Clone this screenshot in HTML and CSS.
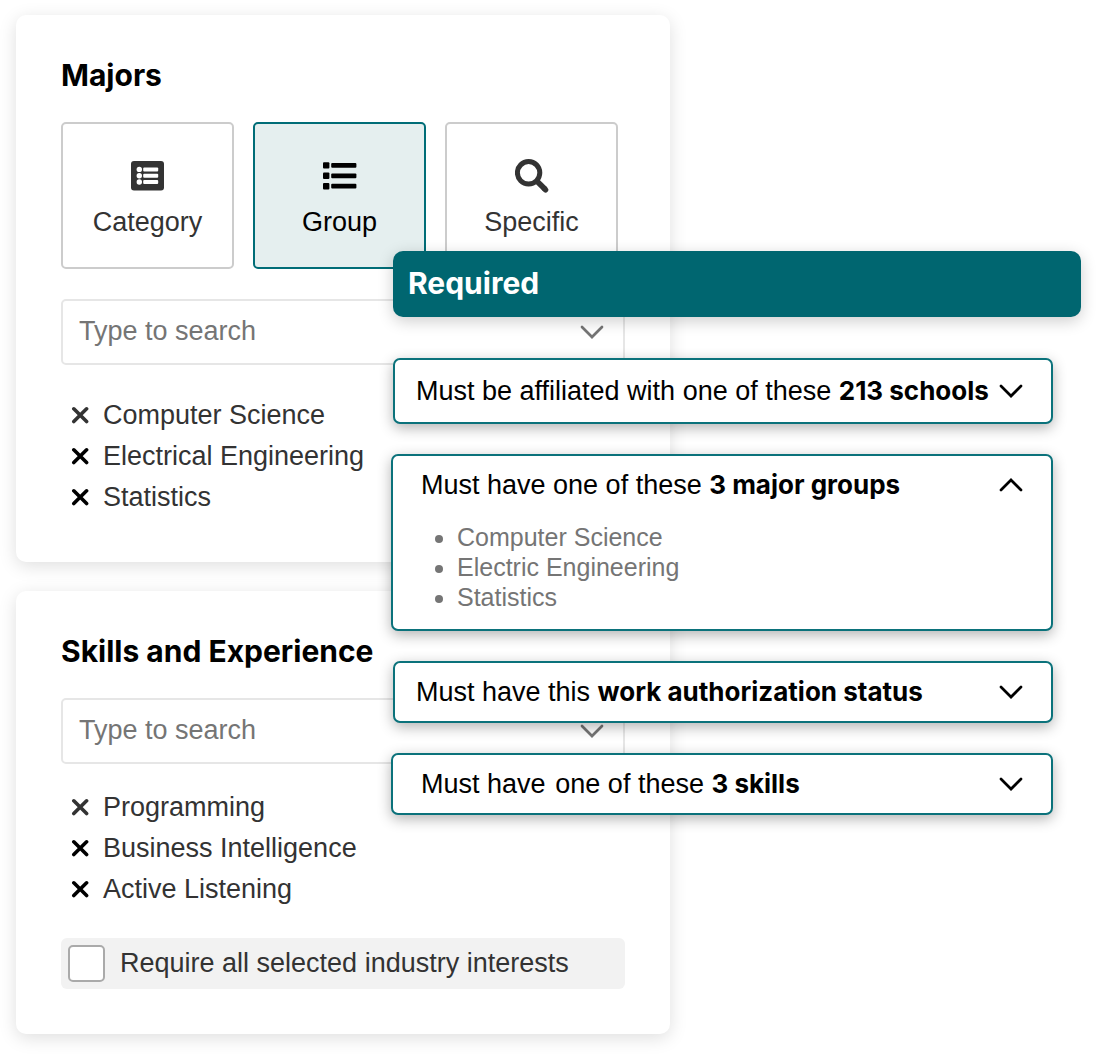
FILE: index.html
```html
<!DOCTYPE html>
<html lang="en">
<head>
<meta charset="utf-8">
<meta name="viewport" content="width=device-width, initial-scale=1">
<title>Candidate requirements</title>
<link rel="stylesheet" href="styles.css">
</head>
<body>
<svg class="sprite" aria-hidden="true">
  <symbol id="chevron-down" viewBox="0 0 24 14"><path d="M2 2l10 10L22 2" fill="none" stroke="currentColor" stroke-width="2.7" stroke-linecap="round"/></symbol>
  <symbol id="chevron-up" viewBox="0 0 24 14"><path d="M2 12L12 2l10 10" fill="none" stroke="currentColor" stroke-width="2.7" stroke-linecap="round"/></symbol>
  <symbol id="cross" viewBox="0 0 18 18"><path d="M2.8 2.8l12.8 12.8M15.6 2.8L2.8 15.6" fill="none" stroke="currentColor" stroke-width="3.6" stroke-linecap="round"/></symbol>
</svg>
<main class="board">
  <div class="filters">
    <section class="card">
      <h2 class="card-title">Majors</h2>
      <div class="modes">
        <button class="mode" type="button">
          <svg class="mode-icon" viewBox="0 0 34 34" aria-hidden="true">
            <rect x="0" y="2" width="33" height="29.4" rx="3" fill="currentColor"/>
            <g fill="#fff"><circle cx="8.3" cy="10.4" r="2.7"/><circle cx="8.3" cy="16.7" r="2.7"/><circle cx="8.3" cy="23" r="2.7"/>
            <rect x="12.2" y="8.4" width="15" height="4" rx="1"/><rect x="12.2" y="14.7" width="15" height="4" rx="1"/><rect x="12.2" y="21" width="15" height="4" rx="1"/></g>
          </svg>
          Category
        </button>
        <button class="mode mode-active" type="button" aria-pressed="true">
          <svg class="mode-icon" viewBox="0 0 34 34" aria-hidden="true">
            <g fill="currentColor"><rect x="0" y="3.2" width="6.4" height="6.4" rx="1"/><rect x="0" y="13.6" width="6.4" height="6.4" rx="1"/><rect x="0" y="24" width="6.4" height="6.4" rx="1"/>
            <rect x="8.2" y="4" width="25.2" height="4.8" rx="1"/><rect x="8.2" y="14.4" width="25.2" height="4.8" rx="1"/><rect x="8.2" y="24.8" width="25.2" height="4.8" rx="1"/></g>
          </svg>
          Group
        </button>
        <button class="mode" type="button">
          <svg class="mode-icon" viewBox="0 0 34 34" aria-hidden="true">
            <circle cx="13.6" cy="13.8" r="11.2" fill="none" stroke="currentColor" stroke-width="5"/>
            <path d="M22 22.2l8.4 8.4" stroke="currentColor" stroke-width="5.6"/>
            <path d="M29.4 29.6l1.2 1.2" stroke="currentColor" stroke-width="5.4" stroke-linecap="round"/>
          </svg>
          Specific
        </button>
      </div>
      <label class="search">
        <input class="search-input" type="text" placeholder="Type to search" aria-label="Search majors">
        <svg class="chevron"><use href="#chevron-down"/></svg>
      </label>
      <ul class="picks picks-roomy">
        <li class="pick"><button class="remove" type="button" aria-label="Remove Computer Science"><svg class="cross"><use href="#cross"/></svg></button>Computer Science</li>
        <li class="pick"><button class="remove" type="button" aria-label="Remove Electrical Engineering"><svg class="cross"><use href="#cross"/></svg></button>Electrical Engineering</li>
        <li class="pick"><button class="remove" type="button" aria-label="Remove Statistics"><svg class="cross"><use href="#cross"/></svg></button>Statistics</li>
      </ul>
    </section>
    <section class="card">
      <h2 class="card-title">Skills and Experience</h2>
      <label class="search">
        <input class="search-input" type="text" placeholder="Type to search" aria-label="Search skills">
        <svg class="chevron"><use href="#chevron-down"/></svg>
      </label>
      <ul class="picks">
        <li class="pick"><button class="remove" type="button" aria-label="Remove Programming"><svg class="cross"><use href="#cross"/></svg></button>Programming</li>
        <li class="pick"><button class="remove" type="button" aria-label="Remove Business Intelligence"><svg class="cross"><use href="#cross"/></svg></button>Business Intelligence</li>
        <li class="pick"><button class="remove" type="button" aria-label="Remove Active Listening"><svg class="cross"><use href="#cross"/></svg></button>Active Listening</li>
      </ul>
      <label class="require"><input class="require-box" type="checkbox">Require all selected industry interests</label>
    </section>
  </div>

  <section class="required">
    <h2 class="required-title">Required</h2>
    <div class="rules">
      <div class="rule rule-inset">
        <button class="rule-head rule-tall" type="button" aria-expanded="false"><span>Must be affiliated with one of these <b>213 schools</b></span><svg class="chevron"><use href="#chevron-down"/></svg></button>
      </div>
      <div class="rule">
        <button class="rule-head" type="button" aria-expanded="true"><span>Must have one of these <b>3 major groups</b></span><svg class="chevron"><use href="#chevron-up"/></svg></button>
        <ul class="rule-list">
          <li>Computer Science</li>
          <li>Electric Engineering</li>
          <li>Statistics</li>
        </ul>
      </div>
      <div class="rule rule-inset">
        <button class="rule-head" type="button" aria-expanded="false"><span>Must have this <b>work authorization status</b></span><svg class="chevron"><use href="#chevron-down"/></svg></button>
      </div>
      <div class="rule">
        <button class="rule-head" type="button" aria-expanded="false"><span>Must have&#8202; one of these <b>3 skills</b></span><svg class="chevron"><use href="#chevron-down"/></svg></button>
      </div>
    </div>
  </section>
</main>
</body>
</html>
```
FILE: styles.css
```css
* { box-sizing: border-box; }

body {
  margin: 0;
  background: #fff;
  color: #333;
  font: 400 27px/40px "Liberation Sans", Arial, sans-serif;
}

button, input { font: inherit; color: inherit; margin: 0; }
h2, ul { margin: 0; padding: 0; }

h2, b { font-family: Inter, "Liberation Sans", sans-serif; font-weight: 700; }
h2 { font-size: 30px; line-height: 40px; }
b { font-size: 26px; line-height: 30px; }

.sprite { display: none; }

/* The required panel shares the middle column with the filter cards. */
.board {
  display: grid;
  grid-template-columns: 375fr 279fr 411fr;
  align-items: start;
  padding: 15px 19px 22px 16px;
}

.filters {
  grid-area: 1 / 1 / 2 / 3;
  display: grid;
  gap: 29px;
}

.card {
  padding: 40px 45px 45px;
  border-radius: 10px;
  background: #fff;
  box-shadow: 0 4px 18px rgba(0, 0, 0, .13);
}

.card-title { color: #000; }

.modes {
  display: grid;
  grid-template-columns: repeat(3, 1fr);
  gap: 19px;
  margin: 27px 7px 30px 0;
}

.mode {
  display: flex;
  flex-direction: column;
  align-items: center;
  gap: 9px;
  height: 147px;
  padding: 35px 0 0;
  border: 2px solid #ccc;
  border-radius: 5px;
  background: #fff;
}

.mode-active {
  border-color: #006d77;
  background: #e5efef;
  color: #000;
}

.mode-icon { width: 34px; height: 34px; }

.search {
  display: flex;
  align-items: center;
  height: 66px;
  margin-top: 27px;
  padding: 0 19px 0 16px;
  border: 2px solid #e6e6e6;
  border-radius: 5px;
  color: #757575;
}

.search-input {
  flex: 1;
  min-width: 0;
  height: 40px;
  padding: 0 0 2px;
  border: 0;
  outline: 0;
  background: none;
}

.search-input::placeholder { color: #757575; opacity: 1; }

.chevron { flex: none; width: 24px; height: 14px; }

.picks { padding: 22px 0 0 10px; list-style: none; }

.picks-roomy { padding-top: 29px; }

.pick {
  display: flex;
  align-items: center;
  gap: 14px;
  height: 41px;
}

.remove {
  display: flex;
  padding: 0;
  border: 0;
  background: none;
  color: #000;
}

.pick:first-child .remove { color: #333; }

.cross { width: 18px; height: 18px; }

.require {
  display: flex;
  align-items: center;
  gap: 15px;
  margin-top: 29px;
  padding: 5px 7px 6px;
  border-radius: 6px;
  background: #f2f2f2;
}

.require-box {
  appearance: none;
  width: 37px;
  height: 37px;
  border: 2px solid #aaa;
  border-radius: 5px;
  background: #fff;
}

.required {
  grid-area: 1 / 2 / 2 / 4;
  z-index: 1;
  margin-top: 236px;
}

.required-title {
  margin-left: 2px;
  padding: 12px 15px 14px;
  border-radius: 10px;
  background: #006670;
  box-shadow: 0 4px 16px rgba(0, 0, 0, .2);
  color: #fff;
}

.rules {
  display: grid;
  gap: 30px;
  margin: 41px 28px 0 0;
}

.rule {
  padding: 0 28px;
  border: 2px solid #0b727b;
  border-radius: 7px;
  background: #fff;
  box-shadow: 0 4px 14px rgba(0, 0, 0, .3);
}

.rule-inset { margin-left: 2px; padding-left: 21px; }

.rule-head {
  display: flex;
  align-items: center;
  justify-content: space-between;
  width: 100%;
  height: 58px;
  padding: 0;
  border: 0;
  background: none;
  color: #000;
  text-align: left;
  white-space: nowrap;
}

.rule-tall { height: 62px; }

.rule-list {
  padding: 8px 0 17px 36px;
  color: #757575;
  font-size: 25px;
  line-height: 30px;
}
```
